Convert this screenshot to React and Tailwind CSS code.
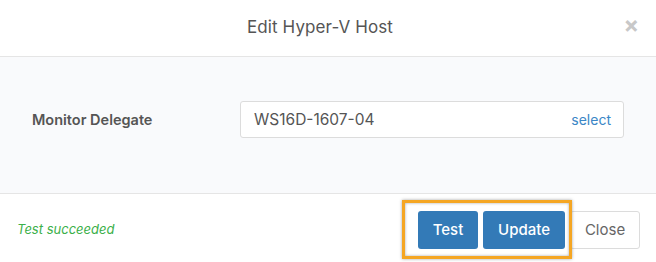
import React from 'react';

export default function App() {
  return (
    <div className="w-[656px] h-[262px] bg-white flex flex-col text-[#555]" style={{ fontFamily: 'Inter, "Noto Sans", sans-serif' }}>
      {/* Header */}
      <div className="h-[57px] flex items-center justify-center relative border-b border-[#e5e5e5] shrink-0 pr-[16px]">
        <h1 className="text-[17px] text-[#555] tracking-[0.1px]">Edit Hyper-V Host</h1>
        <button className="absolute right-[17px] top-[14px] text-[#c8c8c8] text-[23px] font-bold leading-none">×</button>
      </div>

      {/* Body */}
      <div className="h-[137px] bg-[#f9fafc] border-b border-[#e5e5e5] flex items-start pt-[44px] pl-[32px] pr-[32px] shrink-0">
        <label className="w-[208px] h-[37px] flex items-center text-[14.5px] font-semibold text-[#555]">Monitor Delegate</label>
        <div className="flex-1 h-[37px] bg-white border border-[#dcdcdc] rounded-[3px] flex items-center justify-between pl-[13px] pr-[12px]">
          <span className="text-[15.5px] text-[#555]">WS16D-1607-04</span>
          <a className="text-[14px] text-[#3b86c6]">select</a>
        </div>
      </div>

      {/* Footer */}
      <div className="flex-1 flex items-center justify-between pl-[17px] pr-[16px] pt-[4px]">
        <span className="text-[13px] italic text-[#3cb04a]">Test succeeded</span>
        <div className="flex items-center gap-[5px]">
          <div className="relative flex gap-[5px]">
            <button className="w-[60px] h-[38px] bg-[#337ab7] text-white text-[15px] font-medium rounded-[3px]">Test</button>
            <button className="w-[82px] h-[38px] bg-[#337ab7] text-white text-[15px] font-medium rounded-[3px]">Update</button>
            <div className="absolute left-[-16px] right-[-7px] top-[-11px] bottom-[-10px] border-[3px] border-[#f5a623] shadow-[inset_0_0_3px_rgba(0,0,0,0.35),0_0_3px_rgba(0,0,0,0.35)] pointer-events-none" />
          </div>
          <button className="w-[70px] h-[38px] bg-white border border-[#dcdcdc] text-[#666] text-[15px] rounded-[3px]">Close</button>
        </div>
      </div>
    </div>
  );
}
